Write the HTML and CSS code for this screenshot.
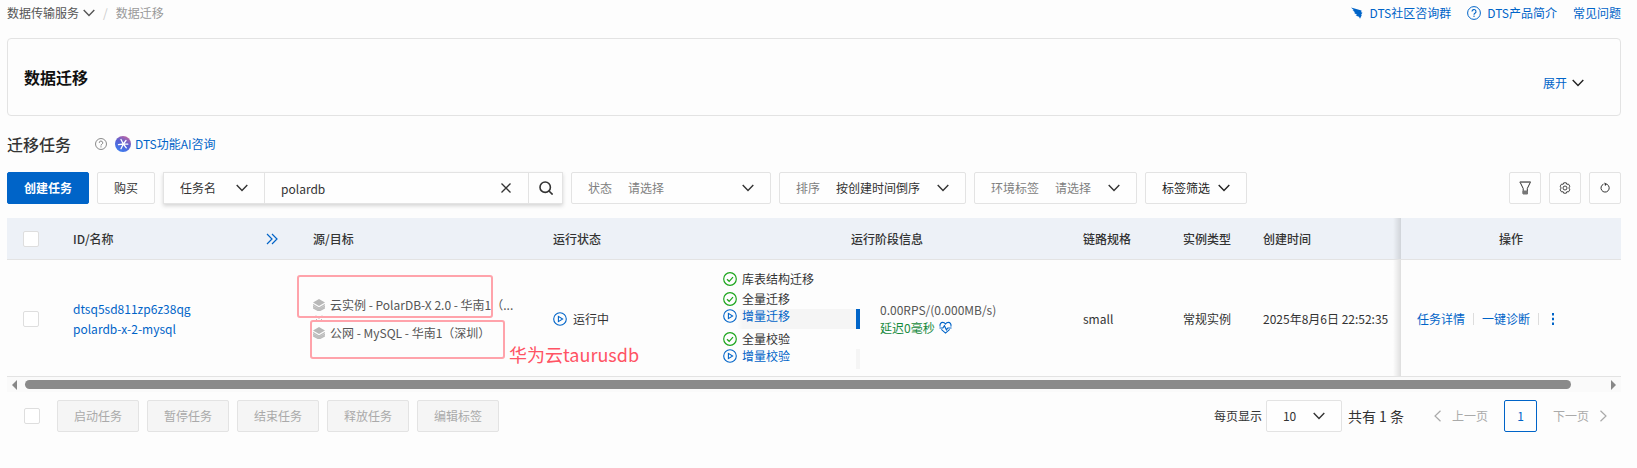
FILE: index.html
```html
<!DOCTYPE html>
<html lang="zh-CN">
<head>
    <meta charset="UTF-8">
    <meta name="viewport" content="width=device-width, initial-scale=1.0">
    <title>数据迁移</title>
    <link rel="stylesheet" href="styles.css">
</head>
<body>
    <!-- shared icons -->
    <svg class="sprite" aria-hidden="true">
        <symbol id="i-down" viewBox="0 0 12 12"><path d="M0.7 3l5.3 5.5L11.3 3" fill="none" stroke="currentColor" stroke-width="1.4"/></symbol>
        <symbol id="i-left" viewBox="0 0 12 12"><path d="M8.5 0.7L3 6l5.500 5.300" fill="none" stroke="currentColor" stroke-width="1.2"/></symbol>
        <symbol id="i-right" viewBox="0 0 12 12"><path d="M3.5 0.7L9 6l-5.500 5.300" fill="none" stroke="currentColor" stroke-width="1.2"/></symbol>
        <symbol id="i-help" viewBox="0 0 14 14">
            <g fill="none" stroke="currentColor"><circle cx="7" cy="7" r="6.4"/><path d="M5 5.6a2 2 0 1 1 3 1.7c-.7.4-1 .7-1 1.5" stroke-width="1.1"/></g>
            <circle cx="7" cy="10.3" r="0.7" fill="currentColor"/>
        </symbol>
        <symbol id="i-done" viewBox="0 0 14 14"><g fill="none" stroke="currentColor" stroke-width="1.2"><circle cx="7" cy="7" r="6.3"/><path d="M4 7.2l2.2 2.1L10 5.2"/></g></symbol>
        <symbol id="i-play" viewBox="0 0 14 14"><g fill="none" stroke="currentColor" stroke-width="1.1"><circle cx="7" cy="7" r="6.3"/><path d="M5.4 4.4v5.2L9.6 7z"/></g></symbol>
        <symbol id="i-layers" viewBox="0 0 12 12">
            <path d="M6 0l6 3.5-6 3.5-6-3.5z" fill="#b8b8b8"/>
            <path d="M0 5.5L6 9l6-3.500M0 7.200l6 3.300 6-3.300M0 8.800l6 3.200 6-3.200" fill="none" stroke="#bbb" stroke-width="1.3"/>
        </symbol>
    </svg>

    <header class="topbar">
        <nav class="breadcrumb">
            <a href="#" class="crumb">数据传输服务<svg class="icon"><use href="#i-down"/></svg></a>
            <span class="slash">/</span>
            <span class="crumb-current">数据迁移</span>
        </nav>
        <nav class="top-links">
            <a href="#"><svg class="icon" viewBox="0 0 12 12"><path d="M0 0.500L10.500 3.500l-.3 1.800 1.300.5-1.300 1.700.5.8-1.700 3.400-1-1.900-3.500-1.300 1.800-.6L2.800 5.700l1.500-.2L1.500 3.300l1.400-.1z" fill="currentColor"/></svg>DTS社区咨询群</a>
            <a href="#"><svg class="icon-md"><use href="#i-help"/></svg>DTS产品简介</a>
            <a href="#">常见问题</a>
        </nav>
    </header>

    <main>
        <section class="intro">
            <h1 class="intro-title">数据迁移</h1>
            <button type="button" class="expand">展开<svg class="icon"><use href="#i-down"/></svg></button>
        </section>

        <div class="heading">
            <h2 class="heading-title">迁移任务</h2>
            <svg class="help"><use href="#i-help"/></svg>
            <a href="#" class="ai-link">
                <svg class="ai-logo" viewBox="0 0 16 16">
                    <defs><linearGradient id="ai" x1="0.8" y1="0" x2="0.3" y2="1"><stop offset="0" stop-color="#c9679f"/><stop offset="0.45" stop-color="#5c5fd0"/><stop offset="1" stop-color="#3b7df0"/></linearGradient></defs>
                    <circle cx="8" cy="8" r="8" fill="url(#ai)"/>
                    <path d="M6 3.5L8.3 8 6 12.7M11 4.5L8.3 8l3 3.8M3.5 8.6L8.3 8l4.5.2" fill="none" stroke="#fff" stroke-width="1.3" stroke-linecap="round"/>
                </svg>DTS功能AI咨询</a>
        </div>

        <form class="toolbar">
            <button type="button" class="btn btn-primary">创建任务</button>
            <button type="button" class="btn">购买</button>
            <div class="search">
                <div class="search-field">
                    <select class="select" aria-label="搜索字段"><option>任务名</option></select>
                    <svg class="icon"><use href="#i-down"/></svg>
                </div>
                <input type="text" class="search-input" aria-label="搜索" value="polardb">
                <button type="button" class="search-clear" aria-label="清除"><svg class="icon" viewBox="0 0 12 12"><path d="M1.5 1.5l9 9M10.5 1.5l-9 9" stroke="currentColor" stroke-width="1.3"/></svg></button>
                <button type="submit" class="search-btn" aria-label="查询"><svg class="icon-md" viewBox="0 0 14 14"><g fill="none" stroke="currentColor" stroke-width="1.6"><circle cx="6.2" cy="6.2" r="5.2"/><path d="M10 10l3.6 3.6"/></g></svg></button>
            </div>
            <div class="filter filter-status">
                <label for="status">状态</label>
                <select id="status" class="select muted"><option>请选择</option></select>
                <svg class="icon"><use href="#i-down"/></svg>
            </div>
            <div class="filter filter-sort">
                <label for="sort">排序</label>
                <select id="sort" class="select"><option>按创建时间倒序</option></select>
                <svg class="icon"><use href="#i-down"/></svg>
            </div>
            <div class="filter filter-env">
                <label for="env">环境标签</label>
                <select id="env" class="select muted"><option>请选择</option></select>
                <svg class="icon"><use href="#i-down"/></svg>
            </div>
            <button type="button" class="btn btn-tag">标签筛选<svg class="icon"><use href="#i-down"/></svg></button>
            <div class="tools">
                <button type="button" class="btn btn-icon" aria-label="筛选"><svg class="icon-md" viewBox="0 0 14 14"><path d="M2 1h10.500L9.300 7.500v5H5.200v-5z" fill="none" stroke="currentColor"/><path d="M1.500 1.200h11.500M5 10h4.500v3H5z" stroke="#777" fill="#777"/></svg></button>
                <button type="button" class="btn btn-icon" aria-label="设置"><svg class="icon" viewBox="0 0 12 12"><g fill="none" stroke="currentColor" stroke-width="0.9"><path d="M4.700 0.800h2.600l.5 1.500 1.700-.2 1.300 2.100L9.900 6l.9 1.800-1.300 2.100-1.700-.2-.5 1.500H4.700l-.5-1.500-1.700.2-1.300-2.100L2.100 6l-.9-1.800 1.300-2.100 1.700.2z"/><circle cx="6" cy="6" r="2"/></g></svg></button>
                <button type="button" class="btn btn-icon" aria-label="刷新"><svg class="icon" viewBox="0 0 12 12"><path d="M4.500 2.200a4.100 4.100 0 1 0 3.600.2" fill="none" stroke="currentColor"/><path d="M5.300 0.500l3 1.500-2.300 2z" fill="currentColor"/></svg></button>
            </div>
        </form>

        <div class="table-wrap">
            <table class="table">
                <colgroup>
                    <col class="col-check"><col class="col-name"><col class="col-name"><col class="col-status"><col>
                    <col class="col-spec"><col class="col-type"><col class="col-time"><col class="col-ops">
                </colgroup>
                <thead>
                    <tr>
                        <th><input type="checkbox" class="checkbox" aria-label="全选"></th>
                        <th>
                            <div class="th-name">ID/名称
                                <svg class="more" viewBox="0 0 12 12"><path d="M1 1l5 5-5 5M6 1l5 5-5 5" fill="none" stroke="currentColor" stroke-width="1.2"/></svg>
                            </div>
                        </th>
                        <th>源/目标</th>
                        <th>运行状态</th>
                        <th class="center">运行阶段信息</th>
                        <th>链路规格</th>
                        <th>实例类型</th>
                        <th>创建时间</th>
                        <th class="center sticky">操作</th>
                    </tr>
                </thead>
                <tbody>
                    <tr>
                        <td><input type="checkbox" class="checkbox" aria-label="选择任务"></td>
                        <td class="links">
                            <a href="#">dtsq5sd811zp6z38qg</a>
                            <a href="#">polardb-x-2-mysql</a>
                        </td>
                        <td class="route">
                            <div class="endpoint"><svg class="icon"><use href="#i-layers"/></svg><span>云实例 - PolarDB-X 2.0 - 华南1（...</span></div>
                            <svg class="route-arrow" viewBox="0 0 8 8"><path d="M1 0.500l3 3 3-3M1 4l3 3 3-3" fill="none" stroke="#bbb"/></svg>
                            <div class="endpoint"><svg class="icon"><use href="#i-layers"/></svg><span>公网 - MySQL - 华南1（深圳）</span></div>
                            <div class="mark mark-source"></div>
                            <div class="mark mark-target"></div>
                            <div class="mark-note">华为云taurusdb</div>
                        </td>
                        <td><div class="status"><svg class="icon-md"><use href="#i-play"/></svg>运行中</div></td>
                        <td>
                            <div class="stage">
                                <ul class="steps">
                                    <li><svg class="icon-md"><use href="#i-done"/></svg><span>库表结构迁移</span></li>
                                    <li><svg class="icon-md"><use href="#i-done"/></svg><span>全量迁移</span></li>
                                    <li class="running active"><svg class="icon-md"><use href="#i-play"/></svg><span>增量迁移</span></li>
                                    <li><svg class="icon-md"><use href="#i-done"/></svg><span>全量校验</span></li>
                                    <li class="running"><svg class="icon-md"><use href="#i-play"/></svg><span>增量校验</span></li>
                                </ul>
                                <div class="metrics">
                                    <div>0.00RPS/(0.000MB/s)</div>
                                    <div class="delay">延迟0毫秒
                                        <svg class="heart" viewBox="0 0 14 14"><path d="M1.200 6C0.500 3.500 2 1.500 4 1.500c1.300 0 2.300.7 3 1.700.7-1 1.700-1.700 3-1.700 2 0 3.500 2 2.800 4.500M2.500 9L7 13l4.500-4M0.500 7.500h3.700l1.600-2.500 2.200 4.500 1.500-2h4" fill="none" stroke="currentColor" stroke-width="1.2"/></svg>
                                    </div>
                                </div>
                            </div>
                        </td>
                        <td>small</td>
                        <td>常规实例</td>
                        <td class="nowrap">2025年8月6日 22:52:35</td>
                        <td class="sticky">
                            <div class="ops">
                                <a href="#">任务详情</a>
                                <a href="#">一键诊断</a>
                                <button type="button" class="dots" aria-label="更多"><svg class="icon" viewBox="0 0 12 12"><path d="M5 0h2v2.400H5zM5 4.800h2v2.400H5zM5 9.600h2V12H5z" fill="currentColor"/></svg></button>
                            </div>
                        </td>
                    </tr>
                </tbody>
            </table>
        </div>

        <div class="scrollbar">
            <span class="arrow arrow-left"></span>
            <div class="track"><div class="thumb"></div></div>
            <span class="arrow arrow-right"></span>
        </div>

        <footer class="footer">
            <input type="checkbox" class="checkbox" aria-label="全选">
            <div class="batch">
                <button type="button" class="btn" disabled>启动任务</button>
                <button type="button" class="btn" disabled>暂停任务</button>
                <button type="button" class="btn" disabled>结束任务</button>
                <button type="button" class="btn" disabled>释放任务</button>
                <button type="button" class="btn" disabled>编辑标签</button>
            </div>
            <div class="pager">
                <label for="size">每页显示</label>
                <div class="filter filter-size">
                    <select id="size" class="select"><option>10</option></select>
                    <svg class="icon"><use href="#i-down"/></svg>
                </div>
                <span class="total">共有 1 条</span>
                <button type="button" class="page-step" disabled><svg class="icon"><use href="#i-left"/></svg>上一页</button>
                <button type="button" class="page-num">1</button>
                <button type="button" class="page-step" disabled>下一页<svg class="icon"><use href="#i-right"/></svg></button>
            </div>
        </footer>
    </main>
</body>
</html>
```

FILE: styles.css
```css
* {
    box-sizing: border-box;
}
body {
    margin: 0;
    padding: 0 16px 0 7px;
    background: #fdfdfd;
    color: #333;
    font-family: "Noto Sans CJK SC", "Open Sans", sans-serif;
    font-size: 12px;
    line-height: 18px;
}
a {
    color: #0064c8;
    text-decoration: none;
}
button, input, select {
    font: inherit;
    color: inherit;
    margin: 0;
}
button {
    cursor: pointer;
}
svg {
    flex: none;
    display: block;
}
.sprite {
    position: absolute;
    width: 0;
    height: 0;
}
.icon {
    width: 12px;
    height: 12px;
}
.icon-md {
    width: 14px;
    height: 14px;
}

/* top bar */
.topbar {
    display: flex;
    justify-content: space-between;
    height: 38px;
    padding-top: 4px;
}
.breadcrumb, .top-links, .crumb, .top-links a {
    display: flex;
    align-items: center;
    height: 18px;
}
.breadcrumb {
    gap: 8px;
}
.crumb {
    gap: 4px;
    color: #555;
}
.slash {
    color: #ccc;
}
.crumb-current {
    color: #999;
}
.top-links {
    gap: 16px;
}
.top-links a {
    gap: 6px;
}

/* intro panel */
.intro {
    display: flex;
    justify-content: space-between;
    align-items: center;
    height: 78px;
    padding: 0 36px 0 16px;
    border: 1px solid #e3e3e3;
    border-radius: 4px;
}
.intro-title {
    margin: 0;
    font-size: 16px;
    color: #111;
}
.expand {
    display: flex;
    align-items: center;
    gap: 5px;
    padding: 12px 0 0;
    border: none;
    background: none;
    color: #0064c8;
}
.expand .icon {
    color: #222;
}

.heading {
    display: flex;
    align-items: center;
    height: 56px;
}
.heading-title {
    margin: 0 24px 0 0;
    font-size: 16px;
    font-weight: 500;
}
.help {
    width: 12px;
    height: 12px;
    margin-right: 8px;
    color: #777;
}
.ai-link {
    display: flex;
    align-items: center;
    gap: 4px;
}
.ai-logo {
    width: 16px;
    height: 16px;
}

/* toolbar */
.toolbar {
    display: flex;
    gap: 8px;
    margin-bottom: 14px;
}
.btn {
    display: flex;
    align-items: center;
    justify-content: center;
    height: 32px;
    padding: 0 16px;
    border: 1px solid #e3e3e3;
    border-radius: 2px;
    background: #fefefe;
    white-space: nowrap;
}
.btn-primary {
    border-color: #0064c8;
    background: #0064c8;
    color: #fff;
    font-weight: 700;
}
.btn:disabled {
    background: #f5f5f5;
    color: #aaa;
    cursor: default;
}
.btn-tag {
    gap: 8px;
    color: #222;
}
.btn-icon {
    width: 32px;
    padding: 0;
}
.tools {
    display: flex;
    gap: 8px;
    margin-left: auto;
}
.search {
    display: flex;
    width: 400px;
    height: 32px;
    border: 1px solid #e3e3e3;
    background: #fefefe;
    box-shadow: 0 2px 4px rgba(0, 0, 0, 0.16);
}
.search-field {
    display: flex;
    align-items: center;
    width: 101px;
    padding: 0 16px;
    border-right: 1px solid #e3e3e3;
}
.select {
    flex: 1;
    min-width: 0;
    padding: 0;
    border: none;
    background: none;
    appearance: none;
    outline: none;
}
.search-input {
    flex: 1;
    min-width: 0;
    padding: 2px 16px 0;
    border: none;
    background: none;
    outline: none;
}
.search-clear, .search-btn {
    display: flex;
    align-items: center;
    justify-content: center;
    width: 34px;
    padding: 0;
    border: none;
    background: none;
}
.search-clear {
    width: 44px;
}
.search-btn {
    border-left: 1px solid #e3e3e3;
}
.filter {
    display: flex;
    align-items: center;
    gap: 16px;
    height: 32px;
    padding: 0 16px;
    border: 1px solid #e3e3e3;
    border-radius: 2px;
    background: #fefefe;
}
.filter label {
    color: #808080;
    white-space: nowrap;
}
.muted {
    color: #808080;
}
.filter-status {
    width: 200px;
}
.filter-sort {
    width: 187px;
}
.filter-env {
    width: 163px;
}
.filter-size {
    width: 76px;
    gap: 0;
}

/* table */
.table {
    width: 100%;
    table-layout: fixed;
    border-collapse: separate;
    border-spacing: 0;
}
.col-check { width: 50px; }
.col-name { width: 240px; }
.col-status { width: 170px; }
.col-spec { width: 100px; }
.col-type { width: 80px; }
.col-time { width: 154px; }
.col-ops { width: 220px; }
.table th, .table td {
    padding: 0 16px;
    border-bottom: 1px solid #e3e3e3;
    text-align: left;
    vertical-align: middle;
}
.table th {
    height: 42px;
    background: #edf1f7;
    font-weight: 500;
    white-space: nowrap;
}
.table td {
    height: 117px;
    padding-top: 1px;
}
.table .center {
    text-align: center;
}
.table td.nowrap {
    white-space: nowrap;
}
.table .sticky {
    position: relative;
}
.sticky::before {
    content: "";
    position: absolute;
    top: 0;
    bottom: 0;
    left: -8px;
    width: 8px;
    background: linear-gradient(to right, transparent, rgba(0, 0, 0, 0.12));
}
.th-name {
    display: flex;
    align-items: center;
    justify-content: space-between;
    padding-right: 3px;
}
.more {
    width: 12px;
    height: 12px;
    color: #0064c8;
}
.checkbox {
    display: block;
    width: 16px;
    height: 16px;
    border: 1px solid #dedede;
    border-radius: 2px;
    background: #fff;
    appearance: none;
}
.links a {
    display: block;
    line-height: 20px;
}
.table .route {
    position: relative;
    color: #555;
}
.endpoint {
    display: flex;
    align-items: center;
    gap: 5px;
    height: 20px;
    white-space: nowrap;
}
.route-arrow {
    width: 8px;
    height: 8px;
    margin-left: 2px;
}
.status {
    display: flex;
    align-items: center;
    gap: 6px;
}
.status svg {
    color: #0064c8;
}
.stage {
    display: flex;
    align-items: center;
    gap: 20px;
}
.steps {
    width: 137px;
    margin: 0;
    padding: 0;
    list-style: none;
}
.steps li {
    display: flex;
    align-items: center;
    gap: 5px;
    height: 20px;
}
.steps svg {
    color: #1ca51c;
}
.steps .running {
    align-items: flex-start;
    border-right: 4px solid #f5f5f5;
    color: #0064c8;
    line-height: 14px;
}
.steps .running svg {
    color: #0064c8;
}
.steps .active {
    border-right-color: #0064c8;
    background: linear-gradient(to right, transparent 14px, #f5f5f5 20px);
}
.metrics {
    color: #555;
    white-space: nowrap;
}
.delay {
    display: flex;
    align-items: center;
    gap: 4px;
    color: #168a3c;
}
.heart {
    width: 13px;
    height: 13px;
    color: #0064c8;
}
.ops {
    display: flex;
    align-items: center;
}
.ops a {
    padding-right: 8px;
    margin-right: 8px;
    border-right: 1px solid #ddd;
    line-height: 12px;
}
.dots {
    padding: 0;
    border: none;
    background: none;
    color: #0064c8;
}

/* review marks over the source and target */
.mark {
    position: absolute;
    border: 2px solid #ffa3ab;
    border-radius: 3px;
}
.mark-source {
    left: 0;
    top: 15px;
    width: 196px;
    height: 43px;
}
.mark-target {
    left: 13px;
    top: 60px;
    width: 195px;
    height: 39px;
}
.mark-note {
    position: absolute;
    left: 212px;
    top: 82px;
    color: #ff5364;
    font-size: 18px;
    line-height: 24px;
    white-space: nowrap;
}

/* horizontal scroll bar */
.scrollbar {
    display: flex;
    align-items: center;
    justify-content: space-between;
    height: 15px;
    padding: 0 5px;
    background: #fafafa;
}
.arrow {
    border: 5px solid transparent;
}
.arrow-left {
    border-left-width: 0;
    border-right-color: #888;
}
.arrow-right {
    border-right-width: 0;
    border-left-color: #888;
}
.track {
    flex: 1;
    padding: 0 8px;
}
.thumb {
    width: 98%;
    height: 9px;
    border-radius: 5px;
    background: #8a8a8a;
}

/* footer */
.footer {
    display: flex;
    align-items: center;
    padding: 8px 12px 8px 17px;
}
.batch {
    display: flex;
    gap: 8px;
    margin-left: 17px;
}
.pager {
    display: flex;
    align-items: center;
    gap: 4px;
    margin-left: auto;
}
.total {
    margin: 0 24px 0 2px;
    font-size: 14px;
}
.page-step {
    display: flex;
    align-items: center;
    gap: 8px;
    padding: 0;
    border: none;
    background: none;
    color: #aaa;
}
.page-num {
    width: 33px;
    height: 32px;
    margin: 0 12px;
    padding: 0;
    border: 1px solid #0064c8;
    border-radius: 2px;
    background: #fefefe;
    color: #0064c8;
}
```
